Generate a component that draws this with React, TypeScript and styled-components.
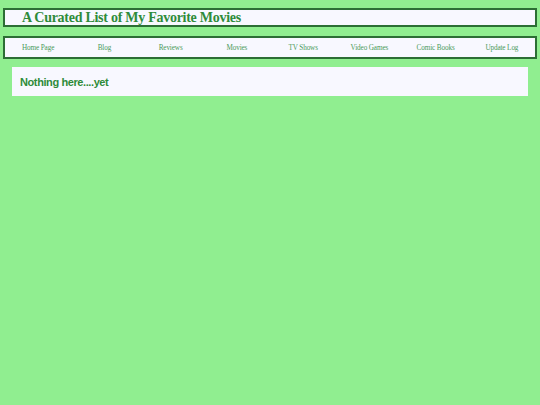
import React from "react";
import styled, { createGlobalStyle } from "styled-components";

const Global = createGlobalStyle`
  html, body { margin: 0; padding: 0; }
  body { background: #90ee90; }
`;

const Page = styled.div`
  padding: 8px 3px 0 3px;
  display: flex;
  flex-direction: column;
`;

const Header = styled.header`
  background: #f8f8ff;
  border: 2px solid #2c6e35;
  height: 15px;
  display: flex;
  align-items: center;
  padding-left: 17px;
`;

const Title = styled.h1`
  margin: 0;
  font-family: "Liberation Serif", "Times New Roman", serif;
  font-weight: bold;
  font-size: 14px;
  letter-spacing: -0.27px;
  color: #2e8b3a;
  line-height: 1;
`;

const Nav = styled.nav`
  margin-top: 9px;
  background: #f8f8ff;
  border: 2px solid #2c6e35;
  height: 19px;
  display: flex;
  align-items: center;
`;

const NavItem = styled.a`
  flex: 1;
  text-align: center;
  font-family: "Liberation Serif", "Times New Roman", serif;
  font-size: 7.2px;
  letter-spacing: -0.12px;
  color: #4a9a5a;
  text-decoration: none;
`;

const Content = styled.main`
  margin: 8px 9px 0 9px;
  background: #f8f8ff;
  height: 29px;
  display: flex;
  align-items: center;
  padding-left: 8px;
`;

const Message = styled.h2`
  margin: 0;
  font-family: "Liberation Sans", Arial, sans-serif;
  font-weight: bold;
  font-size: 11px;
  letter-spacing: -0.4px;
  color: #2e8b3a;
`;

const links = [
  "Home Page",
  "Blog",
  "Reviews",
  "Movies",
  "TV Shows",
  "Video Games",
  "Comic Books",
  "Update Log",
];

export default function App() {
  return (
    <>
      <Global />
      <Page>
        <Header>
          <Title>A Curated List of My Favorite Movies</Title>
        </Header>
        <Nav>
          {links.map((l) => (
            <NavItem key={l} href="#">
              {l}
            </NavItem>
          ))}
        </Nav>
        <Content>
          <Message>Nothing here....yet</Message>
        </Content>
      </Page>
    </>
  );
}
